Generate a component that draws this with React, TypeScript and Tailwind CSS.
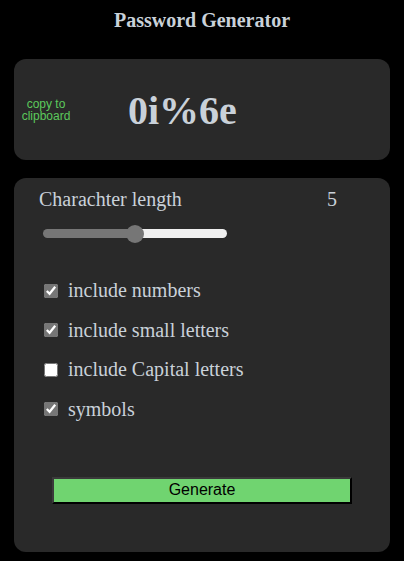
import React, { useState } from 'react';

const options = [
  { label: 'include numbers', checked: true },
  { label: 'include small letters', checked: true },
  { label: 'include Capital letters', checked: false },
  { label: 'symbols', checked: true },
];

const App = () => {
  const [length, setLength] = useState(5);
  const [opts, setOpts] = useState(options.map((o) => o.checked));

  // where the filled part of the track ends
  const fill = ((9 + 166 * (length / 10)) / 184) * 100;

  return (
    <div className="min-h-[561px] bg-black px-[14px] pb-[9px] text-[#c9d1d9] font-['Liberation_Serif',serif]">
      <h3 className="pt-[8px] text-center text-[20px] font-bold leading-[24px]">Password Generator</h3>

      {/* Password display */}
      <div className="mt-[27px] flex h-[101px] items-center rounded-[12px] bg-[#292929]">
        <button className="ml-[1px] w-[62px] text-center font-['Liberation_Sans',sans-serif] text-[12px] leading-[12px] text-[#5cc95c]">
          copy to clipboard
        </button>
        <div className="ml-[51px] mt-[2px] text-[40px] font-bold leading-none">0i%6e</div>
      </div>

      {/* Settings */}
      <div className="mt-[18px] flex h-[374px] flex-col rounded-[12px] bg-[#292929] pl-[25px]">
        <div className="mt-[10px] flex w-[298px] justify-between text-[20px] leading-[23px]">
          <span>Charachter length</span>
          <span>{length}</span>
        </div>
        <input
          type="range"
          min={0}
          max={10}
          value={length}
          onChange={(e) => setLength(Number(e.target.value))}
          style={{ background: `linear-gradient(to right, #767676 ${fill}%, #efefef ${fill}%)` }}
          className="ml-[4px] mt-[18px] h-[9px] w-[184px] appearance-none rounded-full outline-none [&::-webkit-slider-thumb]:h-[18px] [&::-webkit-slider-thumb]:w-[18px] [&::-webkit-slider-thumb]:appearance-none [&::-webkit-slider-thumb]:rounded-full [&::-webkit-slider-thumb]:bg-[#767676]"
        />

        <div className="mt-[41px] flex flex-col gap-[16.5px]">
          {options.map((o, i) => (
            <label key={o.label} className="flex items-center text-[20px] leading-[23px]">
              <input
                type="checkbox"
                checked={opts[i]}
                onChange={() => setOpts(opts.map((v, j) => (j === i ? !v : v)))}
                className="ml-[5px] mr-[10px] h-[14px] w-[14px] accent-[#767676]"
              />
              {o.label}
            </label>
          ))}
        </div>

        <button className="ml-[13px] mt-[56px] h-[27px] w-[300px] border-2 border-[#3a3a3a] border-r-black border-b-black bg-[#70d470] font-['Liberation_Sans',sans-serif] text-[16px] leading-[20px] text-black">
          Generate
        </button>
      </div>
    </div>
  );
};

export default App;
